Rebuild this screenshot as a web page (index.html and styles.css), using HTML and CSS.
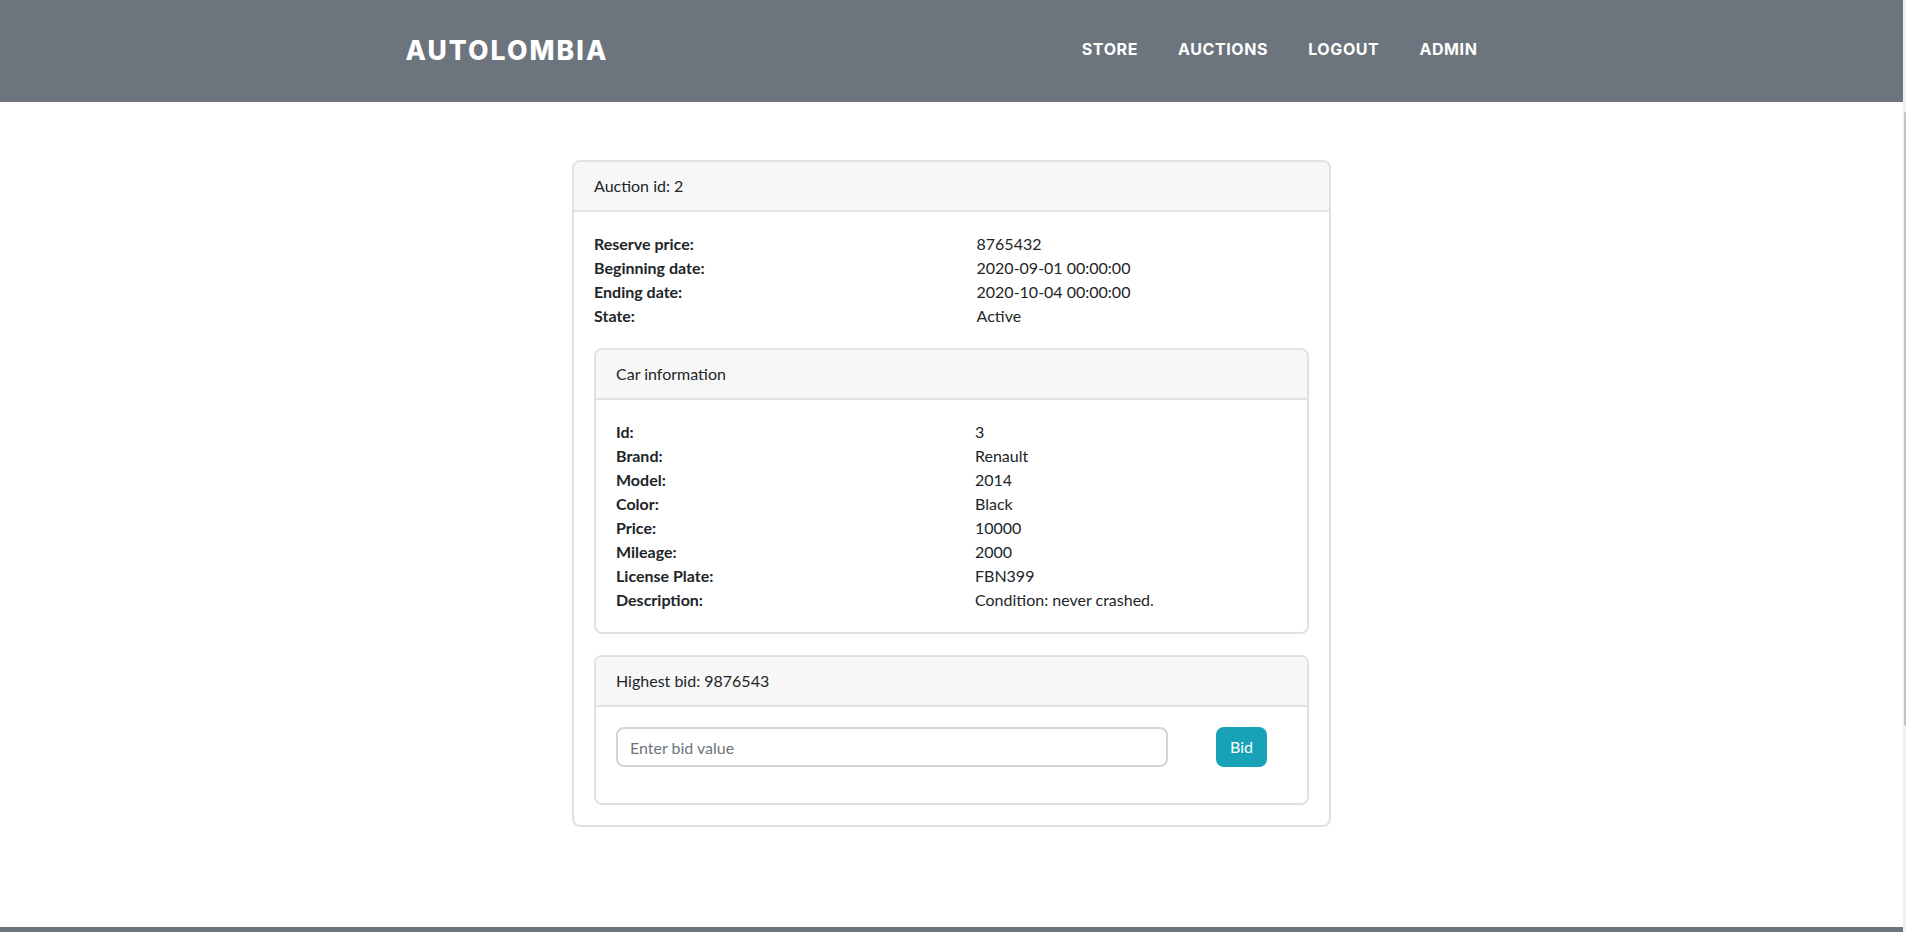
FILE: index.html
```html
<!DOCTYPE html>
<html lang="en">
<head>
<meta charset="utf-8">
<title>Autolombia - Auction</title>
<link rel="stylesheet" href="styles.css">
</head>
<body>
<header class="topbar">
  <div class="topbar-inner">
    <a class="brand" href="#">AUTOLOMBIA</a>
    <nav class="nav">
      <a class="nav-link" href="#">STORE</a>
      <a class="nav-link" href="#">AUCTIONS</a>
      <a class="nav-link" href="#">LOGOUT</a>
      <a class="nav-link" href="#">ADMIN</a>
    </nav>
  </div>
</header>

<main class="page">
  <section class="card card-main">
    <div class="card-header">Auction id: 2</div>
    <div class="card-body">
      <dl class="details">
        <dt>Reserve price:</dt><dd>8765432</dd>
        <dt>Beginning date:</dt><dd>2020-09-01 00:00:00</dd>
        <dt>Ending date:</dt><dd>2020-10-04 00:00:00</dd>
        <dt>State:</dt><dd>Active</dd>
      </dl>

      <section class="card card-sub">
        <div class="card-header">Car information</div>
        <div class="card-body">
          <dl class="details">
            <dt>Id:</dt><dd>3</dd>
            <dt>Brand:</dt><dd>Renault</dd>
            <dt>Model:</dt><dd>2014</dd>
            <dt>Color:</dt><dd>Black</dd>
            <dt>Price:</dt><dd>10000</dd>
            <dt>Mileage:</dt><dd>2000</dd>
            <dt>License Plate:</dt><dd>FBN399</dd>
            <dt>Description:</dt><dd>Condition: never crashed.</dd>
          </dl>
        </div>
      </section>

      <section class="card card-sub card-bid">
        <div class="card-header">Highest bid: 9876543</div>
        <div class="card-body">
          <form class="bid-form">
            <input class="bid-input" type="text" placeholder="Enter bid value">
            <button class="btn-bid" type="button">Bid</button>
          </form>
        </div>
      </section>
    </div>
  </section>
</main>

<footer class="footer"></footer>

<div class="scrollbar"><div class="scrollbar-thumb"></div></div>
</body>
</html>
```

FILE: styles.css
```css
html {
  overflow: hidden;
}

body {
  margin: 0 3px 0 0;
  font-family: Lato, "Noto Sans", sans-serif;
  font-size: 16px;
  line-height: 24px;
  color: #212529;
  background: #ffffff;
}

/* ---------- top bar ---------- */
.topbar {
  background: #6c757d;
  height: 102px;
}

.topbar-inner {
  width: 1140px;
  height: 100%;
  margin: 0 auto;
  padding: 0 44px 0 24px;
  box-sizing: border-box;
  display: flex;
  align-items: center;
  justify-content: space-between;
}

.brand {
  font-family: Inter, "Open Sans", sans-serif;
  font-weight: 800;
  font-size: 26.5px;
  letter-spacing: 2.1px;
  color: #ffffff;
  text-decoration: none;
  line-height: 1;
  padding-bottom: 1px;
}

.nav {
  display: flex;
  gap: 40px;
}

.nav-link {
  font-family: Inter, "Open Sans", sans-serif;
  font-weight: 700;
  font-size: 16px;
  letter-spacing: 0.6px;
  color: #ffffff;
  text-decoration: none;
  line-height: 1;
  padding-bottom: 4px;
}

/* ---------- page ---------- */
.page {
  padding: 58px 0 100px;
}

.card {
  background: #ffffff;
  border: 2px solid #e1e1e1;
  border-radius: 8px;
  box-sizing: border-box;
}

.card-main {
  width: 759px;
  margin: 0 auto;
}

.card-header {
  background: #f7f7f7;
  padding: 12px 20px;
  border-bottom: 2px solid #e1e1e1;
  border-radius: 6px 6px 0 0;
}

.card-body {
  padding: 20px;
}

.details {
  display: grid;
  grid-template-columns: 53.5% 1fr;
  margin: 0;
}

.details dt {
  font-weight: 700;
}

.details dd {
  margin: 0;
}

.card-sub {
  margin-top: 20px;
}

.card-bid {
  margin-top: 21px;
}

/* ---------- bid form ---------- */
.bid-form {
  display: grid;
  grid-template-columns: 552px 1fr;
  column-gap: 28px;
  margin: 0 0 16px;
}

.bid-input {
  height: 40px;
  box-sizing: border-box;
  border: 2px solid #d1d5da;
  border-radius: 8px;
  padding: 0 12px;
  font-family: Lato, "Noto Sans", sans-serif;
  font-size: 16px;
  color: #495057;
  background: #ffffff;
  outline: none;
}

.bid-input::placeholder {
  color: #6c757d;
}

.btn-bid {
  justify-self: center;
  height: 40px;
  padding: 0 14px;
  border: 0;
  border-radius: 8px;
  background: #17a2b8;
  color: #ffffff;
  font-family: Lato, "Noto Sans", sans-serif;
  font-size: 16px;
  line-height: 24px;
  cursor: pointer;
}

/* ---------- footer ---------- */
.footer {
  background: #6c757d;
  height: 60px;
}

/* ---------- thin scrollbar strip (overlay) ---------- */
.scrollbar {
  position: fixed;
  top: 0;
  right: 0;
  width: 3px;
  height: 100%;
  background: #f1f1f1;
}

.scrollbar-thumb {
  position: absolute;
  top: 112px;
  right: 0;
  width: 2px;
  height: 614px;
  background: #c4c4c4;
  border-radius: 1px;
}
```
